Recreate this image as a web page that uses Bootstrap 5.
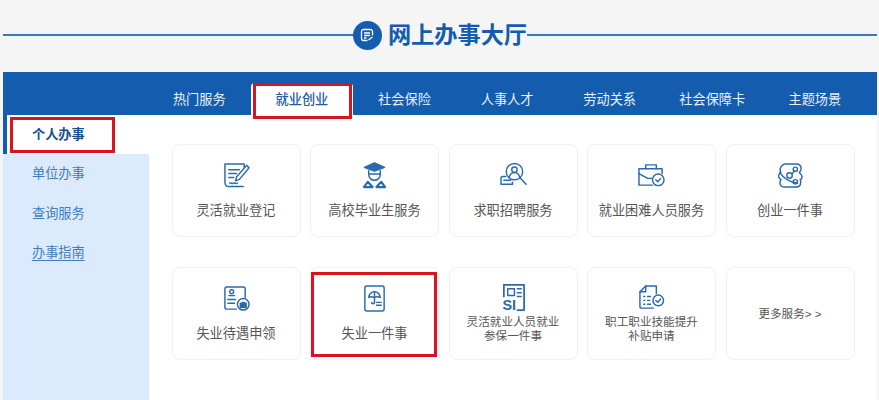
<!DOCTYPE html>
<html lang="zh-CN">
<head>
  <meta charset="UTF-8" />
  <meta name="viewport" content="width=device-width, initial-scale=1.0"/>
  <title>网上办事大厅</title>
  <link href="https://cdn.jsdelivr.net/npm/bootstrap@5.3.3/dist/css/bootstrap.min.css" rel="stylesheet">
  <style>
    body {
      background: #f5f5f6;
      font-family: "Liberation Sans", "Noto Sans CJK SC", sans-serif;
      overflow: hidden;
      height: 400px;
    }
    .hall { padding: 0 2px 0 3px; }
    .hall-title { height: 72px; padding-bottom: 2px; }
    .title-line { height: 2px; background: #3a7ab6; }
    .title-dot { width: 29px; height: 29px; background: #135cae; }
    .title-text { font-size: 23.2px; line-height: 1; color: #135cae; margin: 2px 0 0 6px; font-weight: 700; white-space: nowrap; }
    .hall-panel { background: #fff; height: 328px; }
    .tab-bar { background: #135cae; height: 43px; padding-left: 145px; }
    .tab-item { width: 102.6px; height: 32px; color: #e8f0fa; font-size: 13.2px; line-height: 34px; text-align: center; position: relative; }
    .tab-item.is-on { background: #fff; color: #1f5c9f; border-radius: 4px 4px 0 0; font-weight: 500; }
    .side-col { width: 146px; height: 285px; background: #dbeafc; }
    .side-item { height: 39.5px; line-height: 39.5px; padding-left: 29px; font-size: 13.2px; color: #3f7cbd; position: relative; }
    .side-item.is-on { height: 39px; line-height: 38px; padding-top: 1px; background: #fff; color: #174f8f; font-weight: 700; border-left: 4px solid #135cae; padding-left: 25px; }
    .side-item u { text-underline-offset: 3px; }
    .grid-wrap { padding: 29px 0 0 22.5px; row-gap: 30px; }
    .svc-row { gap: 9.5px; }
    .svc-card { width: 129px; height: 93px; background: #fff; border: 1px solid #f1f1f3; border-radius: 8px; color: #555; font-size: 13.2px; line-height: 19px; position: relative; text-align: center; }
    .svc-card svg { width: 27px; height: 27px; fill: none; stroke: #2b69ad; stroke-width: 1.5; stroke-linecap: round; stroke-linejoin: round; overflow: visible; }
    .svc-name { margin-top: 12px; }
    .svc-small { font-size: 11.6px; line-height: 14.5px; margin-top: 4px; }
    .svc-more { font-size: 11.6px; }
    .mark-box { position: absolute; border: 3px solid #d8151f; pointer-events: none; }
    .mark-tab { left: 2px; right: 1px; top: 0; bottom: -4px; }
    .mark-side { left: 3px; width: 105px; top: 2px; bottom: 1px; }
    .mark-card { left: 0; top: 4px; width: 126px; height: 85px; }
  </style>
</head>
<body>
  <div class="hall">
    <div class="hall-title d-flex align-items-center">
      <div class="title-line flex-grow-1"></div>
      <div class="title-dot rounded-circle d-flex align-items-center justify-content-center">
        <svg width="14" height="14" viewBox="0 0 14 14" fill="none" stroke="#fff" stroke-width="1.3"><path d="M12.500 7.500V3.500a2 2 0 0 0-2-2h-7a2 2 0 0 0-2 2v7a2 2 0 0 0 2 2h4"/><path d="M4 5h6M4 7.500h6M4 10h2.500M8.500 12l4-3"/></svg>
      </div>
      <h1 class="title-text">网上办事大厅</h1>
      <div class="title-line flex-grow-1"></div>
    </div>

    <div class="hall-panel">
      <div class="tab-bar d-flex align-items-end">
        <div class="tab-item">热门服务</div>
        <div class="tab-item is-on">就业创业<span class="mark-box mark-tab"></span></div>
        <div class="tab-item">社会保险</div>
        <div class="tab-item">人事人才</div>
        <div class="tab-item">劳动关系</div>
        <div class="tab-item">社会保障卡</div>
        <div class="tab-item">主题场景</div>
      </div>

      <div class="d-flex">
        <div class="side-col">
          <div class="side-item is-on">个人办事<span class="mark-box mark-side"></span></div>
          <div class="side-item">单位办事</div>
          <div class="side-item">查询服务</div>
          <div class="side-item"><u>办事指南</u></div>
        </div>

        <div class="grid-wrap d-flex flex-column">
          <div class="svc-row d-flex">
            <div class="svc-card d-flex flex-column align-items-center justify-content-center">
              <svg viewBox="0 0 28 28"><path d="M22 6V2H2v19c0 3 1.500 4.500 4 4.500h15"/><path d="M6 8h11M6 12h8M6 16h5"/><path d="M27 6 17 18l-4 1.500 1-4L24.500 3.500z"/><path d="M7 22c1.500-1 2.500 1 4 0s2.500 1 4 0"/></svg>
              <div class="svc-name">灵活就业登记</div>
            </div>
            <div class="svc-card d-flex flex-column align-items-center justify-content-center">
              <svg viewBox="0 0 28 28"><path d="M14 1 3.500 5.500 14 9.500l10.500-4z" fill="#2b69ad"/><path d="M8 9v4a6 6 0 0 0 12 0V9"/><path d="M8 12.500h12"/><path d="M3 26l4-5.500 5 5.500zM25 26l-4-5.500-5 5.500z" stroke-width="2.200"/></svg>
              <div class="svc-name">高校毕业生服务</div>
            </div>
            <div class="svc-card d-flex flex-column align-items-center justify-content-center">
              <svg viewBox="0 0 28 28"><circle cx="15" cy="10" r="8.500"/><circle cx="15" cy="8" r="2.800"/><path d="M9.500 16c.8-3.500 2.800-5 5.500-5s4.700 1.500 5.500 5"/><path d="M21 16.500l6 6.500"/><path d="M6 15H3a2 2 0 0 0-2 2v6h12v-2"/><path d="M4 19h7"/></svg>
              <div class="svc-name">求职招聘服务</div>
            </div>
            <div class="svc-card d-flex flex-column align-items-center justify-content-center">
              <svg viewBox="0 0 28 28"><path d="M8 7V3h11v4"/><path d="M15 24H1V7h24v5"/><path d="M1 12l9 5h4"/><circle cx="21" cy="18.500" r="6"/><path d="M18.500 18.500l2 2 3-3.500"/></svg>
              <div class="svc-name">就业困难人员服务</div>
            </div>
            <div class="svc-card d-flex flex-column align-items-center justify-content-center">
              <svg viewBox="0 0 28 28"><path d="M8 2h12c3 0 5 2 5 5 0 2-1 3-2 4 1 1 3 2 3 4s-1 3-2 3c1 2 1 4 0 6-1 2-3 2-5 2H8c-3 0-5-2-5-4 0-2 1-3 1-4-2-1-3-3-2-5 1-1 2-2 2-2-1-2-1-5 1-7 1-1 2-2 3-2z"/><circle cx="13" cy="14" r="2.800"/><circle cx="19" cy="7.500" r="2.200"/><circle cx="19" cy="20.500" r="2.200"/><path d="M3 11c4 6 10 10 18 11M16 12l2-3"/></svg>
              <div class="svc-name">创业一件事</div>
            </div>
          </div>

          <div class="svc-row d-flex">
            <div class="svc-card d-flex flex-column align-items-center justify-content-center">
              <svg viewBox="0 0 28 28"><path d="M14 25H4a2 2 0 0 1-2-2V4a2 2 0 0 1 2-2h17a2 2 0 0 1 2 2v9"/><circle cx="9" cy="7" r="2"/><path d="M6 11h6M5 15h8M5 19h7"/><circle cx="21" cy="20" r="6"/><path d="M18 23v-4h6v4zM20 19v-1h2v1" fill="#2b69ad"/></svg>
              <div class="svc-name">失业待遇申领</div>
            </div>
            <div class="svc-card d-flex flex-column align-items-center justify-content-center">
              <svg viewBox="0 0 28 28"><rect x="4" y="1" width="20" height="26" rx="2"/><path d="M8 13a6 6 0 0 1 12 0c-2-1-4-1-6 0-2-1-4-1-6 0z"/><path d="M14 7v11c0 2-3 2-3 0"/><path d="M16 18h5M16 21h5"/></svg>
              <div class="svc-name">失业一件事</div>
              <span class="mark-box mark-card"></span>
            </div>
            <div class="svc-card d-flex flex-column align-items-center justify-content-center">
              <svg viewBox="0 0 28 28"><path d="M18 27h7V1H4v12" stroke-width="1.800"/><rect x="8" y="5" width="7" height="7"/><path d="M18 5h4M18 9h4M18 13h4"/><text x="2.500" y="27" font-family="Liberation Sans" font-size="15" font-weight="700" fill="#2b69ad" stroke="none">SI</text></svg>
              <div class="svc-small">灵活就业人员就业<br>参保一件事</div>
            </div>
            <div class="svc-card d-flex flex-column align-items-center justify-content-center">
              <svg viewBox="0 0 28 28"><path d="M16 25H4a2 2 0 0 1-2-2V8l6-6h11v8"/><path d="M8 2v6H2"/><path d="M6 13h1M6 17h1M6 21h1M10 13h3M10 17h2M10 21h3"/><circle cx="21" cy="17" r="5.500"/><path d="M18.500 17l2 2 3-3.500"/></svg>
              <div class="svc-small">职工职业技能提升<br>补贴申请</div>
            </div>
            <div class="svc-card svc-more d-flex align-items-center justify-content-center">更多服务&gt; &gt;</div>
          </div>
        </div>
      </div>
    </div>
  </div>
  <script src="https://cdn.jsdelivr.net/npm/bootstrap@5.3.3/dist/js/bootstrap.bundle.min.js"></script>
</body>
</html>
